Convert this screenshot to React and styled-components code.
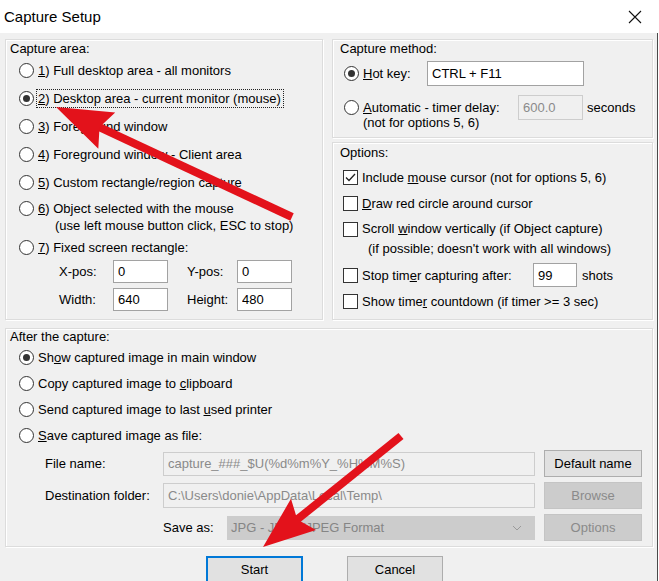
import React from 'react'
import styled, { createGlobalStyle } from 'styled-components'

const GlobalStyle = createGlobalStyle`
  html, body {
    margin: 0;
    padding: 0;
    background: #f0f0f0;
  }
  body {
    font-family: "Liberation Sans", Arial, sans-serif;
    font-size: 13px;
    color: #000;
  }
`

const Window = styled.div`
  position: relative;
  width: 659px;
  height: 581px;
  overflow: hidden;
  background: #fff;
`

const TitleBar = styled.div`
  height: 33px;
  display: flex;
  align-items: center;
  justify-content: space-between;
  padding: 0 17px 0 4px;
  background: #fff;
`

const Title = styled.div`
  font-size: 15px;
  color: #000;
`

const Body = styled.div`
  width: 658px;
  height: 548px;
  box-sizing: border-box;
  padding: 6px 0 0 5px;
  background: #f0f0f0;
  border-right: 1px solid #4a4a4a;
`

const TopRow = styled.div`
  display: grid;
  grid-template-columns: 318px 321px;
  column-gap: 9px;
`

const RightColumn = styled.div`
  display: flex;
  flex-direction: column;
  gap: 4px;
`

const Group = styled.div`
  box-sizing: border-box;
  border: 1px solid #dcdcdc;
  box-shadow: inset 1px 1px 0 #fff, 1px 1px 0 #fff;
  padding-bottom: ${p => p.$bottom || 0}px;
  margin-top: ${p => p.$gap || 0}px;
  flex: ${p => (p.$grow ? 1 : 'none')};
  width: ${p => (p.$w ? `${p.$w}px` : 'auto')};
`

const GroupLabel = styled.div`
  line-height: 15px;
  padding-left: ${p => p.$indent}px;
  margin-top: ${p => p.$top || 0}px;
`

const OptionList = styled.div`
  display: flex;
  flex-direction: column;
  padding-left: ${p => p.$pad}px;
  margin-top: ${p => p.$top || 0}px;
`

const Option = styled.div`
  display: flex;
  align-items: ${p => (p.$multi ? 'flex-start' : 'center')};
  gap: 4px;
  height: ${p => p.$h}px;
  box-sizing: border-box;
  padding-top: ${p => p.$padTop || 0}px;
  line-height: ${p => p.$lh || 15}px;
  white-space: nowrap;
`

const Radio = styled.span`
  position: relative;
  flex: none;
  width: 15px;
  height: 15px;
  box-sizing: border-box;
  border: 1px solid #333;
  border-radius: 50%;
  background: #fff;
  margin-top: ${p => p.$mt || 0}px;

  &::after {
    content: '';
    display: ${p => (p.$on ? 'block' : 'none')};
    position: absolute;
    left: 3px;
    top: 3px;
    width: 7px;
    height: 7px;
    border-radius: 50%;
    background: #333;
  }
`

const Check = styled.span`
  flex: none;
  display: flex;
  align-items: center;
  justify-content: center;
  width: 15px;
  height: 15px;
  box-sizing: border-box;
  border: 1px solid #333;
  background: #fff;
  margin-top: ${p => p.$mt || 0}px;
`

const Focus = styled.span`
  outline: 1px dotted #222;
  outline-offset: 1px;
  padding-right: 1px;
`

const Lines = styled.div`
  display: flex;
  flex-direction: column;
  width: ${p => (p.$w ? `${p.$w}px` : 'auto')};
  padding-top: ${p => p.$pt || 0}px;
`

const Indented = styled.span`
  padding-left: ${p => p.$in}px;
`

const Fixed = styled.span`
  display: inline-block;
  flex: none;
  width: ${p => p.$w}px;
`

const TextBox = styled.input`
  flex: none;
  box-sizing: border-box;
  width: ${p => (p.$w ? `${p.$w}px` : '100%')};
  height: ${p => p.$h || 24}px;
  margin: 0;
  padding: 0 4px;
  font-family: inherit;
  font-size: 13px;
  color: ${p => (p.disabled ? '#8a8a8a' : '#000')};
  background: ${p => (p.disabled ? '#f0f0f0' : '#fff')};
  border: 1px solid ${p => (p.disabled ? '#cdcdcd' : '#a2a2a2')};
  outline: none;
`

const Suffix = styled.span`
  margin-left: ${p => p.$ml}px;
  line-height: ${p => p.$lh || 15}px;
`

const Coords = styled.div`
  display: grid;
  grid-template-columns: 54px 55px 69px 55px;
  grid-auto-rows: 23px;
  row-gap: 5px;
  margin-left: 53px;
  align-items: center;
`

const CoordLabel = styled.span`
  padding-left: ${p => p.$in || 0}px;
`

const MethodRow = styled.div`
  display: flex;
  align-items: ${p => (p.$top ? 'flex-start' : 'center')};
  gap: 4px;
  margin-top: ${p => p.$mt}px;
  padding-left: 11px;
  line-height: 15px;
  white-space: nowrap;
`

const FileGrid = styled.div`
  display: grid;
  grid-template-columns: 109px 372px 98px;
  grid-auto-rows: 27px;
  column-gap: 9px;
  row-gap: 5px;
  margin: 2px 0 0 39px;
  align-items: center;
`

const SaveAs = styled.div`
  display: flex;
  align-items: center;
  height: 100%;
`

const Select = styled.div`
  flex: 1;
  height: 24px;
  display: flex;
  align-items: center;
  justify-content: space-between;
  padding: 0 12px 0 3px;
  background: #cccccc;
  border: 1px solid #cccccc;
  color: #858585;
  box-sizing: border-box;
`

const Button = styled.button`
  box-sizing: border-box;
  width: ${p => (p.$w ? `${p.$w}px` : '100%')};
  height: 27px;
  margin: 0;
  padding: 0;
  font-family: inherit;
  font-size: 13px;
  color: ${p => (p.disabled ? '#8a8a8a' : '#000')};
  background: ${p => (p.disabled ? '#cccccc' : '#e1e1e1')};
  border: 1px solid ${p => (p.$primary ? '#0078d7' : p.disabled ? '#c4c4c4' : '#adadad')};
  box-shadow: ${p => (p.$primary ? 'inset 0 0 0 1px #0078d7' : 'none')};
`

const ButtonRow = styled.div`
  display: flex;
  gap: 44px;
  margin-top: 9px;
  padding-left: 201px;
`

const Overlay = styled.svg`
  position: absolute;
  left: 0;
  top: 0;
  pointer-events: none;
`

const CheckMark = () => (
  <svg width="11" height="9" viewBox="0 0 11 9">
    <polyline points="1,4.5 4,7.5 10,1" fill="none" stroke="#222" strokeWidth="1.3" />
  </svg>
)

const CloseIcon = () => (
  <svg width="14" height="14" viewBox="0 0 14 14">
    <path d="M1 1 L13 13 M13 1 L1 13" stroke="#111" strokeWidth="1.1" />
  </svg>
)

const Chevron = () => (
  <svg width="10" height="6" viewBox="0 0 10 6">
    <polyline points="1,1 5,5 9,1" fill="none" stroke="#9a9a9a" strokeWidth="1" />
  </svg>
)

// red annotation arrows from the screenshot
const Arrow = ({ from, to, head = 55, half = 20, width = 8 }) => {
  const dx = to[0] - from[0]
  const dy = to[1] - from[1]
  const len = Math.hypot(dx, dy)
  const ux = dx / len
  const uy = dy / len
  const bx = to[0] - ux * head
  const by = to[1] - uy * head
  const px = -uy
  const py = ux
  const pts = [
    to,
    [bx + px * half, by + py * half],
    [bx + ux * 8, by + uy * 8],
    [bx - px * half, by - py * half],
  ]
  return (
    <g fill="#e3121b" stroke="none">
      <line x1={from[0]} y1={from[1]} x2={bx + ux * 10} y2={by + uy * 10} stroke="#e3121b" strokeWidth={width} />
      <polygon points={pts.map(p => p.join(',')).join(' ')} />
    </g>
  )
}

export default function App() {
  return (
    <>
      <GlobalStyle />
      <Window>
        <TitleBar>
          <Title>Capture Setup</Title>
          <CloseIcon />
        </TitleBar>
        <Body>
          <TopRow>
            <Group $bottom={8}>
              <GroupLabel $indent={4} $top={1}>Capture area:</GroupLabel>
              <OptionList $pad={13}>
                <Option $h={28}><Radio /><span><u>1</u>) Full desktop area - all monitors</span></Option>
                <Option $h={28}><Radio $on /><Focus><u>2</u>) Desktop area - current monitor (mouse)</Focus></Option>
                <Option $h={28}><Radio /><span><u>3</u>) Foreground window</span></Option>
                <Option $h={28}><Radio /><span><u>4</u>) Foreground window - Client area</span></Option>
                <Option $h={28}><Radio /><span><u>5</u>) Custom rectangle/region capture</span></Option>
                <Option $h={38} $multi $padTop={4} $lh={17}>
                  <Radio $mt={1} />
                  <Lines>
                    <span><u>6</u>) Object selected with the mouse</span>
                    <Indented $in={17}>(use left mouse button click, ESC to stop)</Indented>
                  </Lines>
                </Option>
                <Option $h={26}><Radio /><span><u>7</u>) Fixed screen rectangle:</span></Option>
              </OptionList>
              <Coords>
                <CoordLabel>X-pos:</CoordLabel>
                <TextBox $h={23} readOnly value="0" />
                <CoordLabel $in={19}>Y-pos:</CoordLabel>
                <TextBox $h={23} readOnly value="0" />
                <CoordLabel>Width:</CoordLabel>
                <TextBox $h={23} readOnly value="640" />
                <CoordLabel $in={19}>Height:</CoordLabel>
                <TextBox $h={23} readOnly value="480" />
              </Coords>
            </Group>

            <RightColumn>
              <Group $bottom={7}>
                <GroupLabel $indent={7} $top={1}>Capture method:</GroupLabel>
                <MethodRow $mt={5}>
                  <Radio $on />
                  <Fixed $w={60}><u>H</u>ot key:</Fixed>
                  <TextBox $w={157} $h={25} readOnly value="CTRL + F11" />
                </MethodRow>
                <MethodRow $mt={9} $top>
                  <Radio $mt={5} />
                  <Lines $w={151} $pt={5}>
                    <span><u>A</u>utomatic - timer delay:</span>
                    <span>(not for options 5, 6)</span>
                  </Lines>
                  <TextBox $w={65} $h={25} disabled value="600.0" readOnly />
                  <Suffix $ml={0} $lh={25}>seconds</Suffix>
                </MethodRow>
              </Group>

              <Group $grow>
                <GroupLabel $indent={7} $top={2}>Options:</GroupLabel>
                <OptionList $pad={10} $top={4}>
                  <Option $h={26}><Check $on><CheckMark /></Check><span>Include <u>m</u>ouse cursor (not for options 5, 6)</span></Option>
                  <Option $h={26}><Check /><span><u>D</u>raw red circle around cursor</span></Option>
                  <Option $h={46} $multi $padTop={3} $lh={20}>
                    <Check $mt={3} />
                    <Lines>
                      <span>Scroll <u>w</u>indow vertically (if Object capture)</span>
                      <Indented $in={6}>(if possible; doesn't work with all windows)</Indented>
                    </Lines>
                  </Option>
                  <Option $h={26}>
                    <Check />
                    <Fixed $w={167}>Stop tim<u>e</u>r capturing after:</Fixed>
                    <TextBox $w={44} $h={24} readOnly value="99" />
                    <Suffix $ml={1}>shots</Suffix>
                  </Option>
                  <Option $h={26}><Check /><span>Show time<u>r</u> countdown (if timer &gt;= 3 sec)</span></Option>
                </OptionList>
              </Group>
            </RightColumn>
          </TopRow>

          <Group $gap={8} $w={648} $bottom={5}>
            <GroupLabel $indent={4}>After the capture:</GroupLabel>
            <OptionList $pad={13}>
              <Option $h={26}><Radio $on /><span>Sh<u>o</u>w captured image in main window</span></Option>
              <Option $h={26}><Radio /><span>Copy captured image to <u>c</u>lipboard</span></Option>
              <Option $h={26}><Radio /><span>Send captured image to last <u>u</u>sed printer</span></Option>
              <Option $h={26}><Radio /><span><u>S</u>ave captured image as file:</span></Option>
            </OptionList>
            <FileGrid>
              <span>File name:</span>
              <TextBox disabled readOnly value="capture_###_$U(%d%m%Y_%H%M%S)" />
              <Button>Default name</Button>
              <span>Destination folder:</span>
              <TextBox $h={25} disabled readOnly value="C:\Users\donie\AppData\Local\Temp\" />
              <Button disabled>Browse</Button>
              <span />
              <SaveAs>
                <Fixed $w={64}>Save as:</Fixed>
                <Select>
                  <span>JPG - JPEG/JPEG Format</span>
                  <Chevron />
                </Select>
              </SaveAs>
              <Button disabled>Options</Button>
            </FileGrid>
          </Group>

          <ButtonRow>
            <Button $w={97} $primary>Start</Button>
            <Button $w={96}>Cancel</Button>
          </ButtonRow>
        </Body>

        <Overlay width="659" height="581" viewBox="0 0 659 581">
          <Arrow from={[292, 217]} to={[56, 107]} head={56} half={20} />
          <Arrow from={[401, 436]} to={[263, 547]} head={52} half={20} />
        </Overlay>
      </Window>
    </>
  )
}
